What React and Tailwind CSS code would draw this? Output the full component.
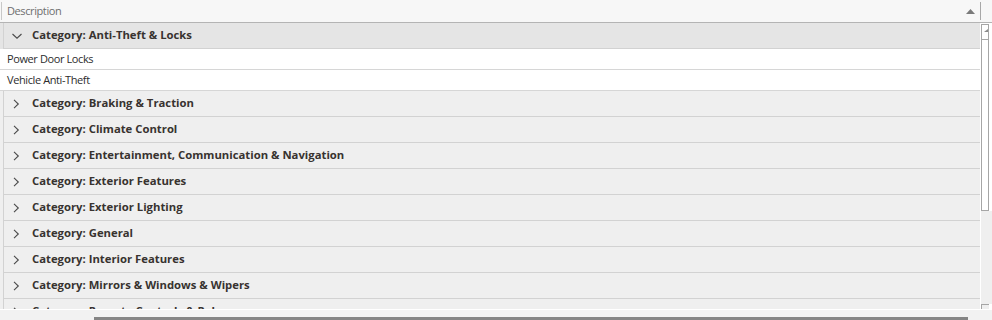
import React from "react";

// Categorias do grid; a primeira fica expandida
const grupos = [
  { nome: "Anti-Theft & Locks", aberto: true, itens: ["Power Door Locks", "Vehicle Anti-Theft"] },
  { nome: "Braking & Traction" },
  { nome: "Climate Control" },
  { nome: "Entertainment, Communication & Navigation" },
  { nome: "Exterior Features" },
  { nome: "Exterior Lighting" },
  { nome: "General" },
  { nome: "Interior Features" },
  { nome: "Mirrors & Windows & Wipers" },
  { nome: "Remote Controls & Releases" },
];

const Chevron = ({ aberto }) => (
  <svg width="10" height="10" viewBox="0 0 10 10" className="shrink-0">
    {aberto ? (
      <path d="M0.5 3 L5 7.2 L9.5 3" fill="none" stroke="#4a4a4a" strokeWidth="1.1" />
    ) : (
      <path d="M2 0.8 L6.3 5 L2 9.2" fill="none" stroke="#4a4a4a" strokeWidth="1.1" />
    )}
  </svg>
);

const GroupRow = ({ nome, aberto }) => (
  <div className={`flex h-[26px] shrink-0 ${aberto ? "bg-[#e5e5e5]" : "bg-[#efefef]"}`}>
    <div className="w-[3px]" />
    <div className="flex flex-1 items-center gap-[10px] border-b border-l border-[#d2d2d2] pl-[8px]">
      <Chevron aberto={aberto} />
      <span className="text-[11.3px] font-bold text-[#383330]">Category: {nome}</span>
    </div>
  </div>
);

const DataRow = ({ texto }) => (
  <div className="flex h-[21px] shrink-0 items-center border-b border-[#d6d6d6] bg-white pl-[7px]">
    <span className="text-[11px] tracking-[-0.4px] text-[#2d2d2d]">{texto}</span>
  </div>
);

export default function App() {
  return (
    <div
      className="flex h-[320px] w-[992px] flex-col overflow-hidden bg-white"
      style={{ fontFamily: "'Open Sans', 'Noto Sans', sans-serif" }}
    >
      {/* Cabeçalho da coluna */}
      <div className="flex h-[23px] shrink-0 border-b border-[#b4b4b4] bg-[#f7f7f7]">
        <div className="my-[2px] w-[2px] border-r border-[#c8c8c8]" />
        <div className="flex flex-1 items-center pl-[5px]">
          <span className="text-[11px] tracking-[-0.4px] text-[#6e6e6e]">Description</span>
        </div>
        <div className="flex w-[20px] items-center justify-center">
          <svg width="9" height="5" viewBox="0 0 9 5">
            <path d="M0 5 L4.5 0 L9 5 Z" fill="#7a7a7a" />
          </svg>
        </div>
        <div className="my-[2px] w-[1px] bg-[#a8a8a8]" />
        <div className="w-[11px]" />
      </div>

      {/* Corpo com linhas e barra vertical */}
      <div className="flex h-[286px] shrink-0 overflow-hidden bg-[#efefef]">
        <div className="flex w-[980px] flex-col overflow-hidden">
          {grupos.map((g) => (
            <React.Fragment key={g.nome}>
              <GroupRow nome={g.nome} aberto={g.aberto} />
              {g.aberto && g.itens.map((t) => <DataRow key={t} texto={t} />)}
            </React.Fragment>
          ))}
        </div>
        <div className="flex w-[12px] flex-col bg-white pl-[1px] pt-[1px]">
          <div className="flex h-[187px] w-[8px] flex-col border-b border-l border-r border-t border-[#a6a6a6] bg-white">
            <div className="flex h-[15px] justify-end border-b border-[#a6a6a6] pt-[4px]">
              <svg width="4" height="3" viewBox="0 0 4 3">
                <path d="M0 3 L4 0 L4 3 Z" fill="#8a8a8a" />
              </svg>
            </div>
          </div>
          <div className="flex-1 bg-[#efefef]" />
          <div className="h-[5px] w-[8px] border-l border-t border-[#a6a6a6] bg-[#efefef]" />
        </div>
      </div>

      {/* Barra horizontal */}
      <div className="h-[1px] shrink-0 bg-white" />
      <div className="flex-1 bg-[#f2f2f2] pl-[94px] pt-[7px]">
        <div className="h-[4px] w-[874px] bg-[#858585]" />
      </div>
    </div>
  );
}
